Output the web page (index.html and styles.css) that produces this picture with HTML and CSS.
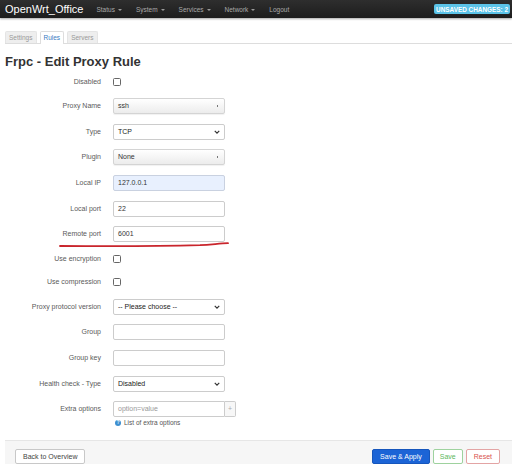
FILE: index.html
```html
<!DOCTYPE html>
<html lang="en">
<head>
    <meta charset="UTF-8">
    <meta name="viewport" content="width=device-width, initial-scale=1.0">
    <title>Frpc - Edit Proxy Rule</title>
    <link rel="stylesheet" href="styles.css">
</head>
<body>
    <!-- 顶部导航 -->
    <header class="topbar">
        <a class="brand" href="#">OpenWrt_Office</a>
        <ul class="menu">
            <li class="drop">Status</li>
            <li class="drop">System</li>
            <li class="drop">Services</li>
            <li class="drop">Network</li>
            <li>Logout</li>
        </ul>
        <span class="badge">UNSAVED CHANGES: 2</span>
    </header>

    <div class="main">
        <ul class="tabs">
            <li>Settings</li>
            <li class="active">Rules</li>
            <li>Servers</li>
        </ul>

        <h2 class="title">Frpc - Edit Proxy Rule</h2>

        <div class="form">
            <div class="row cb">
                <label>Disabled</label>
                <span class="check"></span>
            </div>
            <div class="row">
                <label>Proxy Name</label>
                <div class="field dropdown">ssh<span class="dot"></span></div>
            </div>
            <div class="row">
                <label>Type</label>
                <div class="field select">TCP<svg class="chev" viewBox="0 0 8 5"><path d="M1 1 L4 4 L7 1" /></svg></div>
            </div>
            <div class="row">
                <label>Plugin</label>
                <div class="field dropdown">None<span class="dot"></span></div>
            </div>
            <div class="row">
                <label>Local IP</label>
                <div class="field filled">127.0.0.1</div>
            </div>
            <div class="row">
                <label>Local port</label>
                <div class="field">22</div>
            </div>
            <div class="row">
                <label>Remote port</label>
                <div class="field">6001</div>
            </div>
            <div class="row cb">
                <label>Use encryption</label>
                <span class="check"></span>
            </div>
            <div class="row cb">
                <label>Use compression</label>
                <span class="check"></span>
            </div>
            <div class="row">
                <label>Proxy protocol version</label>
                <div class="field select">-- Please choose --<svg class="chev" viewBox="0 0 8 5"><path d="M1 1 L4 4 L7 1" /></svg></div>
            </div>
            <div class="row">
                <label>Group</label>
                <div class="field"></div>
            </div>
            <div class="row">
                <label>Group key</label>
                <div class="field"></div>
            </div>
            <div class="row">
                <label>Health check - Type</label>
                <div class="field select">Disabled<svg class="chev" viewBox="0 0 8 5"><path d="M1 1 L4 4 L7 1" /></svg></div>
            </div>
            <div class="row extra">
                <label>Extra options</label>
                <div class="control">
                    <div class="group">
                        <div class="field placeholder">option=value</div>
                        <span class="add">+</span>
                    </div>
                    <div class="help"><span class="qmark">?</span>List of extra options</div>
                </div>
            </div>
        </div>
    </div>

    <div class="actions">
        <button class="btn">Back to Overview</button>
        <span class="spacer"></span>
        <button class="btn apply">Save &amp; Apply</button>
        <button class="btn save">Save</button>
        <button class="btn reset">Reset</button>
    </div>

    <!-- 截图上的红色标注线 -->
    <svg class="mark" viewBox="0 0 512 464" width="512" height="464">
        <path d="M60 246 C 120 246.5, 170 246, 200 245.2 C 212 244.6, 220 243.4, 228 243.2" />
    </svg>
</body>
</html>
```

FILE: styles.css
```css
body {
    margin: 0;
    font-family: "Liberation Sans", Arial, sans-serif;
    color: #555;
    background: #fff;
    position: relative;
    height: 464px;
    overflow: hidden;
}
.topbar {
    height: 18px;
    display: flex;
    align-items: center;
    background: linear-gradient(#2e2e2e, #1d1d1d);
    box-shadow: 0 1px 2px rgba(0, 0, 0, 0.35);
    padding: 0 2px 0 5px;
}
.brand {
    color: #fff;
    font-size: 11px;
    text-decoration: none;
    margin-right: 11px;
}
.menu {
    list-style: none;
    margin: 0;
    padding: 0;
    display: flex;
    gap: 10px;
    flex: 1;
}
.menu li {
    color: #aaa;
    font-size: 6.5px;
    padding: 0 2px;
}
.menu li.drop::after {
    content: "";
    display: inline-block;
    margin-left: 3px;
    vertical-align: middle;
    border-top: 2px solid #999;
    border-left: 2px solid transparent;
    border-right: 2px solid transparent;
}
.badge {
    background: #5bc3e8;
    color: #fff;
    font-weight: bold;
    font-size: 6.4px;
    padding: 1.5px 2px;
    border-radius: 2px;
}
.main {
    padding: 0 5px;
}
.tabs {
    list-style: none;
    margin: 13px 0 0;
    padding: 0;
    display: flex;
    gap: 3px;
    border-bottom: 1px solid #ddd;
    margin-right: -5px;
}
.tabs li {
    font-size: 6.5px;
    color: #999;
    background: #eee;
    border: 1px solid #e4e4e4;
    border-bottom: none;
    padding: 0 3px;
    line-height: 11px;
    border-radius: 2px 2px 0 0;
}
.tabs li.active {
    background: #fff;
    color: #3a7bbf;
    border-color: #ddd;
    margin-bottom: -1px;
    line-height: 12px;
}
.title {
    margin: 10px 0 0;
    font-size: 13px;
    line-height: 16px;
    color: #333;
    font-weight: bold;
}
.row {
    display: flex;
    align-items: flex-start;
    padding: 4.8px 0;
}
.row.cb {
    padding: 3.75px 0;
}
.row label {
    width: 96px;
    flex: none;
    text-align: right;
    font-size: 7px;
    line-height: 16px;
    color: #5a5a5a;
    margin-right: 12px;
}
.check {
    width: 6px;
    height: 6px;
    border: 1px solid #666;
    border-radius: 1.5px;
    margin-top: 4px;
    background: #fff;
}
.field {
    box-sizing: border-box;
    width: 112px;
    height: 16px;
    border: 1px solid #ccc;
    border-radius: 2px;
    padding: 0 4px;
    font-size: 7px;
    line-height: 14px;
    color: #333;
    background: #fff;
    position: relative;
}
.field.dropdown {
    background: linear-gradient(#fff, #ececec);
    border-color: #d4d4d4;
    box-shadow: 0 1px 1px rgba(0, 0, 0, 0.06);
}
.field .dot {
    position: absolute;
    right: 6px;
    top: 6px;
    width: 1.5px;
    height: 1.5px;
    background: #777;
}
.field.select {
    color: #222;
}
.chev {
    position: absolute;
    right: 4px;
    top: 5px;
    width: 6px;
    height: 4px;
    fill: none;
    stroke: #333;
    stroke-width: 1.6;
}
.field.filled {
    background: #e8f0fe;
    border-color: #c9d1e0;
}
.field.placeholder {
    color: #999;
    border-radius: 2px 0 0 2px;
}
.control {
    display: flex;
    flex-direction: column;
}
.group {
    display: flex;
}
.add {
    box-sizing: border-box;
    width: 11px;
    height: 16px;
    border: 1px solid #ccc;
    border-left: none;
    border-radius: 0 2px 2px 0;
    background: #f7f7f7;
    color: #aaa;
    font-size: 7px;
    line-height: 14px;
    text-align: center;
}
.help {
    font-size: 6.5px;
    color: #555;
    margin-top: 1px;
    line-height: 9px;
    padding-left: 2px;
    display: flex;
    align-items: center;
}
.qmark {
    width: 6px;
    height: 6px;
    border-radius: 50%;
    background: #3d8fd0;
    color: #fff;
    font-size: 4.5px;
    line-height: 6px;
    text-align: center;
    margin-right: 3px;
    font-weight: bold;
}
.actions {
    position: absolute;
    top: 440px;
    left: 5px;
    right: 0;
    height: 30px;
    background: #f6f6f6;
    border-top: 1px solid #e6e6e6;
    display: flex;
    align-items: flex-start;
    gap: 3px;
    padding: 8px 12px 0 10px;
    box-sizing: border-box;
}
.spacer {
    flex: 1;
}
.btn {
    font-family: "Liberation Sans", Arial, sans-serif;
    font-size: 7px;
    height: 15px;
    line-height: 13px;
    padding: 0 7px;
    border-radius: 2px;
    border: 1px solid #c8c8c8;
    background: #fff;
    color: #444;
}
.btn.apply {
    background: #1c64d6;
    border-color: #1656bc;
    color: #fff;
    padding: 0 7px;
}
.btn.save {
    border-color: #9ed29e;
    color: #5cb85c;
    padding: 0 6px;
}
.btn.reset {
    border-color: #e3a4a4;
    color: #d9534f;
    padding: 0 7px;
}
.mark {
    position: absolute;
    left: 0;
    top: 0;
    pointer-events: none;
}
.mark path {
    fill: none;
    stroke: #c9252c;
    stroke-width: 1.8;
    stroke-linecap: round;
}
```
